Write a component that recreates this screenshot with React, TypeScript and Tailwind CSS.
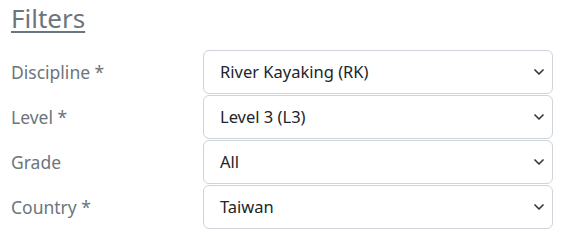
import React from "react";

const rows = [
  { label: "Discipline *", value: "River Kayaking (RK)" },
  { label: "Level *", value: "Level 3 (L3)" },
  { label: "Grade", value: "All" },
  { label: "Country *", value: "Taiwan" },
];

function Chevron() {
  return (
    <svg width="10" height="6" viewBox="0 0 10 6" fill="none" className="shrink-0">
      <path d="M1 1l4 4 4-4" stroke="#343a40" strokeWidth="1.7" strokeLinecap="round" strokeLinejoin="round" />
    </svg>
  );
}

export default function App() {
  return (
    <div
      className="w-[570px] h-[241px] bg-white pl-[11px]"
      style={{ fontFamily: '"Noto Sans", "Open Sans", Arial, sans-serif' }}
    >
      <h2 className="text-[26px] leading-[36px] text-[#6c757d] underline underline-offset-[3px] decoration-[1.5px] h-[50px]">
        Filters
      </h2>
      <div className="flex flex-col gap-[1px]">
        {rows.map((r) => (
          <div key={r.label} className="flex items-center">
            <div className="w-[192px] text-[17.5px] text-[#6c757d]">{r.label}</div>
            <div className="w-[350px] h-[44px] border border-[#ced4da] rounded-[6px] flex items-center justify-between pl-[16px] pr-[8px]">
              <span className="text-[16.5px] text-[#212529]">{r.value}</span>
              <Chevron />
            </div>
          </div>
        ))}
      </div>
    </div>
  );
}
